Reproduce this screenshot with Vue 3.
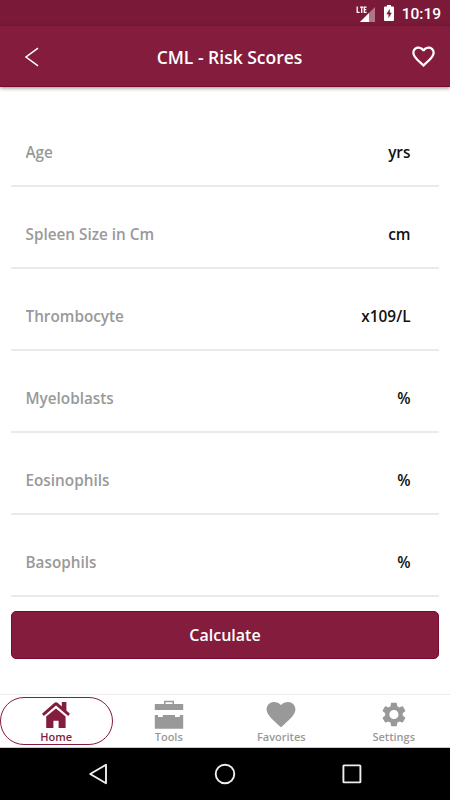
<script setup>
import { reactive, ref } from 'vue'

const fields = reactive([
  { label: 'Age', unit: 'yrs', value: '' },
  { label: 'Spleen Size in Cm', unit: 'cm', value: '' },
  { label: 'Thrombocyte', unit: 'x109/L', value: '' },
  { label: 'Myeloblasts', unit: '%', value: '' },
  { label: 'Eosinophils', unit: '%', value: '' },
  { label: 'Basophils', unit: '%', value: '' }
])

const tabs = ['Home', 'Tools', 'Favorites', 'Settings']
const activeTab = ref('Home')
</script>

<template>
  <div class="screen">
    <div class="status-bar">
      <svg class="signal" width="20" height="18" viewBox="0 0 20 18">
        <path d="M19 2V17H4z" fill="#b2748a" />
        <path d="M13 8V17H4z" fill="#fff" />
        <path d="M.5 0H11.5V9H.5z" fill="#7a1a38" />
        <path d="M1.2 1.5V7.4H3.6M4.1 2.1H7.3M5.7 2.1V8M10.6 2.1H8.3V7.4H10.6M8.3 4.7H10.3" fill="none" stroke="#fff" stroke-width="1.3" />
      </svg>
      <svg class="battery" width="10" height="16" viewBox="0 0 10 16">
        <path d="M3 0H7V1.5H9Q10 1.5 10 2.5V15Q10 16 9 16H1Q0 16 0 15V2.5Q0 1.5 1 1.5H3z" fill="#fff" />
        <path d="M5.8 3.8L2.4 9.2H4.5V13.2L7.8 7.8H5.8z" fill="#7a1a38" />
      </svg>
      <span class="clock">10:19</span>
    </div>

    <header class="header">
      <svg class="back" width="16" height="20" viewBox="0 0 16 20">
        <path d="M14 1.2L2 10L14 18.8" fill="none" stroke="#fff" stroke-width="1.5" />
      </svg>
      <h1 class="title">CML - Risk Scores</h1>
      <svg class="favorite" width="27" height="27" viewBox="0 0 24 24">
        <path fill="#fff" d="M16.5 3c-1.74 0-3.41.81-4.5 2.09C10.91 3.81 9.24 3 7.5 3 4.42 3 2 5.42 2 8.5c0 3.78 3.4 6.86 8.55 11.54L12 21.35l1.45-1.32C18.6 15.36 22 12.28 22 8.5 22 5.42 19.58 3 16.5 3zm-4.4 15.55l-.1.1-.1-.1C7.14 14.24 4 11.39 4 8.5 4 6.5 5.5 5 7.5 5c1.54 0 3.04.99 3.57 2.36h1.87C13.46 5.99 14.96 5 16.5 5c2 0 3.5 1.5 3.5 3.5 0 2.89-3.14 5.74-7.9 10.05z" />
      </svg>
    </header>

    <main class="form">
      <label v-for="field in fields" :key="field.label" class="row">
        <input v-model="field.value" class="input" :placeholder="field.label">
        <span class="unit">{{ field.unit }}</span>
      </label>
      <button class="calculate">Calculate</button>
    </main>

    <nav class="tabs">
      <div
        v-for="tab in tabs"
        :key="tab"
        class="tab" :class="{ active: tab === activeTab }"
        @click="activeTab = tab"
      >
        <svg class="tab-icon" width="30" height="30" viewBox="0 0 30 30" fill="currentColor">
          <template v-if="tab === 'Home'">
            <path d="M15 8.4L24.6 16.6V28H17.6V20.7H12.4V28H5.2V16.6z" />
            <path d="M1 13.8L13.2 2.9Q15 1.4 16.8 2.9L20.8 6.5V2H25.4V10.6L29 13.8L27.2 16L15 5.6L2.8 16z" />
          </template>
          <template v-else-if="tab === 'Tools'">
            <path d="M10 4V.8H20V4H29.2V10H.8V4H10zM11.5 2.3V4H18.5V2.3z" fill-rule="evenodd" />
            <path d="M.8 15H4V17H8.8V15H21V17H25.8V15H29.2V28.8H.8z" />
          </template>
          <path
            v-else-if="tab === 'Favorites'"
            d="M15 27.3L12.9 25.4C5.5 18.7 .6 14.3 .6 9.2C.6 5 3.9 1.9 8 1.9C10.6 1.9 13.2 3 15 5.1C16.8 3 19.4 1.9 22 1.9C26.1 1.9 29.4 5 29.4 9.2C29.4 14.3 24.5 18.7 17.1 25.4z"
          />
          <path
            v-else
            transform="translate(.9 .4) scale(1.17)"
            d="M19.43 12.98c.04-.32.07-.64.07-.98s-.03-.66-.07-.98l2.11-1.65c.19-.15.24-.42.12-.64l-2-3.46c-.12-.22-.39-.3-.61-.22l-2.49 1c-.52-.4-1.08-.73-1.69-.98l-.38-2.65C14.46 2.18 14.25 2 14 2h-4c-.25 0-.46.18-.49.42l-.38 2.65c-.61.25-1.17.59-1.69.98l-2.49-1c-.23-.09-.49 0-.61.22l-2 3.46c-.13.22-.07.49.12.64l2.11 1.65c-.04.32-.07.65-.07.98s.03.66.07.98l-2.11 1.65c-.19.15-.24.42-.12.64l2 3.46c.12.22.39.3.61.22l2.49-1c.52.4 1.08.73 1.69.98l.38 2.65c.03.24.24.42.49.42h4c.25 0 .46-.18.49-.42l.38-2.65c.61-.25 1.17-.59 1.69-.98l2.49 1c.23.09.49 0 .61-.22l2-3.46c.12-.22.07-.49-.12-.64l-2.11-1.65zM12 15.9c-2.15 0-3.9-1.75-3.9-3.9s1.75-3.9 3.9-3.9 3.9 1.75 3.9 3.9-1.75 3.9-3.9 3.9z"
          />
        </svg>
        <span class="tab-label">{{ tab }}</span>
      </div>
    </nav>

    <div class="system-nav">
      <svg width="22" height="22" viewBox="0 0 22 22">
        <path d="M19 1.8V20.2L3.2 11z" />
      </svg>
      <svg width="22" height="22" viewBox="0 0 22 22">
        <circle cx="11" cy="11" r="9.3" />
      </svg>
      <svg width="22" height="22" viewBox="0 0 22 22">
        <rect x="2.4" y="2.4" width="17" height="17" rx=".6" />
      </svg>
    </div>
  </div>
</template>

<style>
body {
  margin: 0;
}
</style>

<style scoped>
.screen {
  display: flex;
  flex-direction: column;
  width: 450px;
  height: 800px;
  overflow: hidden;
  background-color: #fff;
  font-family: "Open Sans", sans-serif;
  font-weight: 600;
}

.status-bar {
  display: flex;
  flex: none;
  align-items: center;
  justify-content: flex-end;
  box-sizing: border-box;
  height: 26px;
  padding-right: 9px;
  background-color: #7a1a38;
  color: #fff;
}

.signal {
  margin: 2px 8px 0 0;
}

.battery {
  margin-right: 8px;
}

.clock {
  padding-top: 1px;
  font-family: Roboto, sans-serif;
  font-size: 15.5px;
  font-weight: 500;
  line-height: 26px;
}

.header {
  display: grid;
  flex: none;
  grid-template-columns: 29px 1fr 27px;
  align-items: center;
  box-sizing: border-box;
  height: 61px;
  padding: 1px 13px 0 24px;
  border-bottom: 1px solid #780a2d;
  background-color: #841c3d;
  box-shadow: 0 1px 4px rgba(0, 0, 0, 0.45);
  color: #fff;
}

.title {
  margin: 0;
  padding-top: 1px;
  font-size: 17.5px;
  font-weight: 600;
  line-height: 24px;
  text-align: center;
  text-indent: -4px;
}

.form {
  display: flex;
  flex: 1;
  flex-direction: column;
  padding: 18px 11px 0;
}

.row {
  display: flex;
  flex: none;
  align-items: center;
  box-sizing: border-box;
  height: 82px;
  padding: 14px 28.5px 0 14.5px;
  border-bottom: 2px solid #eaeaea;
}

.input {
  flex: 1;
  min-width: 0;
  padding: 0;
  border: none;
  outline: none;
  background: none;
  font: inherit;
  font-size: 15.3px;
}

.input::placeholder {
  color: #999;
  opacity: 1;
}

.unit {
  color: #111;
  font-size: 15.4px;
}

.calculate {
  height: 48px;
  margin-top: 14px;
  padding: 0;
  border: 1px solid #780a2d;
  border-radius: 5px;
  background-color: #841c3d;
  color: #fff;
  font: inherit;
  font-size: 16px;
}

.tabs {
  display: grid;
  flex: none;
  grid-template-columns: repeat(4, 112.5px);
  box-sizing: border-box;
  height: 54px;
  padding-top: 2px;
  border-top: 1px solid #ececec;
  border-bottom: 1px solid #c8c8c8;
}

.tab {
  display: flex;
  flex-direction: column;
  align-items: center;
  box-sizing: border-box;
  height: 48px;
  padding-top: 2px;
  border: 1px solid transparent;
  border-radius: 24px;
  color: #999;
}

.tab.active {
  border-color: #841c3d;
  color: #841c3d;
}

.tab-icon {
  flex: none;
}

.tab-label {
  font-size: 11px;
  line-height: 14px;
}

.system-nav {
  display: flex;
  flex: none;
  align-items: center;
  justify-content: space-between;
  box-sizing: border-box;
  height: 52px;
  padding: 0 87px;
  background-color: #000;
  fill: none;
  stroke: #eee;
  stroke-width: 1.9;
  stroke-linejoin: round;
}
</style>
